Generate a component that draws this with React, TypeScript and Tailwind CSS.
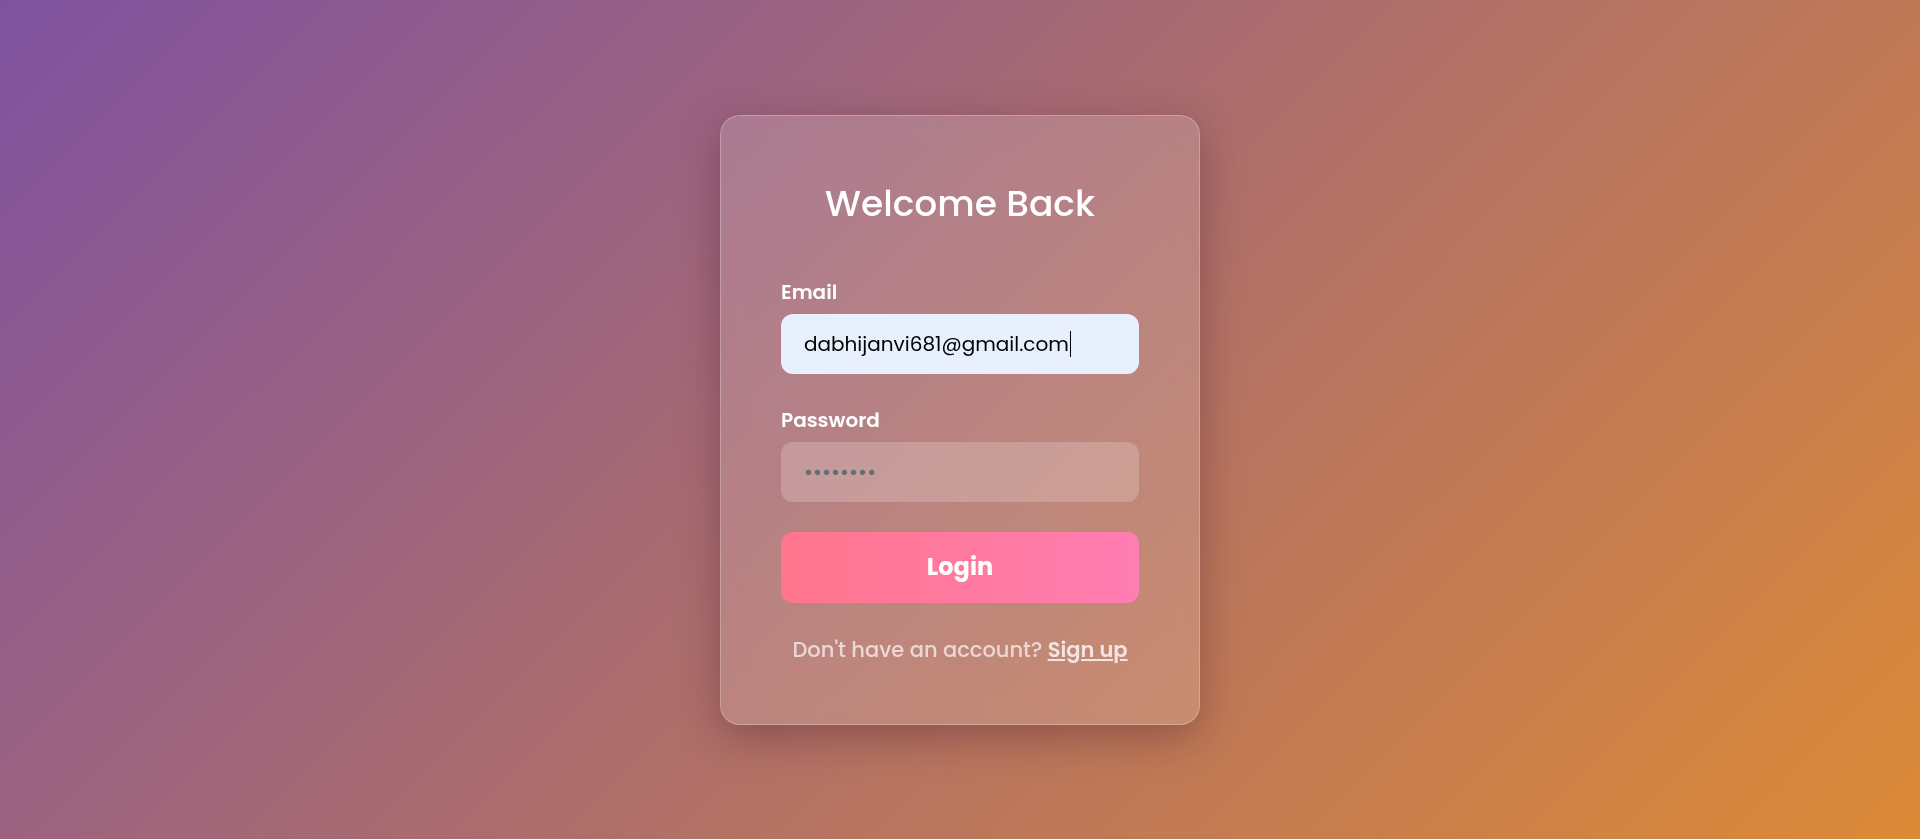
import * as React from "react";

export default function App() {
    return (
        <div className="min-h-screen w-full flex items-center justify-center bg-[linear-gradient(135deg,#7f52a0_0%,#dc8a36_100%)] font-['Poppins','Inter',sans-serif]">
            <div className="w-[480px] px-[60px] pt-[64px] pb-[60px] rounded-[20px] border border-white/25 bg-white/15 backdrop-blur-md shadow-[0_12px_40px_rgba(60,20,40,0.35)]">
                <h2 className="text-center text-white text-[36px] leading-[48px] font-medium">Welcome Back</h2>

                <form className="flex flex-col mt-[50px]" onSubmit={(e) => e.preventDefault()}>
                    <label className="text-white text-[20px] leading-[28px] font-semibold mb-[8px]">Email</label>
                    <div className="h-[60px] rounded-[12px] bg-[#e8f0fe] px-[23px] flex items-center text-black text-[20px]">
                        <span>dabhijanvi681@gmail.com</span>
                        <span className="inline-block w-px h-[26px] bg-black ml-[1px]"></span>
                    </div>

                    <label className="mt-[32px] text-white text-[20px] leading-[28px] font-semibold mb-[8px]">Password</label>
                    <input
                        type="password"
                        placeholder="••••••••"
                        className="h-[60px] rounded-[12px] bg-white/20 px-[23px] text-[18px] font-bold text-black outline-none placeholder:text-[#66706f]"
                    />

                    <button type="submit" className="mt-[30px] h-[71px] rounded-[12px] bg-[linear-gradient(90deg,#ff758c,#ff7eb3)] text-white text-[24px] font-bold">
                        Login
                    </button>

                    <p className="mt-[33px] text-center text-[#ebd7d5] text-[21px] leading-[28px] font-medium">
                        Don't have an account? <a href="#" className="text-[#f3e3e1] font-semibold underline">Sign up</a>
                    </p>
                </form>
            </div>
        </div>
    );
}
